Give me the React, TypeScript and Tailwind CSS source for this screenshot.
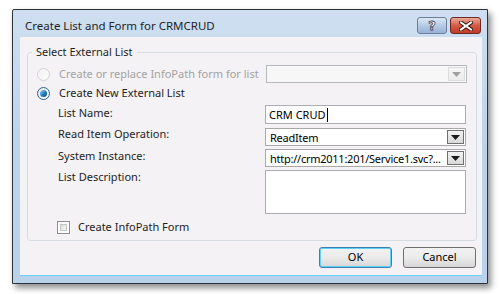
import React from "react";

const font = { fontFamily: '"Noto Sans", "Open Sans", sans-serif' };

function Arrow({ disabled }: { disabled?: boolean }) {
  return (
    <div
      className={`w-[17px] h-full flex items-center justify-center border ${
        disabled
          ? "border-[#dcdcdc] bg-gradient-to-b from-[#f6f6f6] to-[#ececec]"
          : "border-[#707070] bg-gradient-to-b from-[#f3f3f3] to-[#d9d9d9]"
      }`}
    >
      <svg width="9" height="5" viewBox="0 0 9 5">
        <path d="M0 0h9L4.5 5z" fill={disabled ? "#a0a0a0" : "#1a1a1a"} />
      </svg>
    </div>
  );
}

function Select({ value, disabled }: { value?: string; disabled?: boolean }) {
  return (
    <div
      className={`w-[201px] h-[18px] flex items-stretch border p-px ${
        disabled ? "border-[#b7babc] bg-[#f7f7f7]" : "border-[#a8a8a8] bg-white"
      }`}
    >
      <div className="flex-1 pl-[3px] text-[11px] tracking-[-0.25px] leading-[15px] text-black whitespace-nowrap overflow-hidden">
        {value}
      </div>
      <Arrow disabled={disabled} />
    </div>
  );
}

function Radio({ checked, disabled }: { checked?: boolean; disabled?: boolean }) {
  return (
    <div
      className={`w-[13px] h-[13px] rounded-full border flex items-center justify-center ${
        disabled
          ? "border-[#d2d2d2] bg-gradient-to-br from-[#f2f2f2] to-[#fcfcfc]"
          : "border-[#2c628b] bg-gradient-to-br from-[#e6e6e6] to-[#ffffff]"
      }`}
    >
      {checked && (
        <div className="w-[7px] h-[7px] rounded-full bg-gradient-to-br from-[#9ad5f7] via-[#2784c9] to-[#0b3e6f]" />
      )}
    </div>
  );
}

export default function App() {
  return (
    <div className="w-[499px] h-[294px] bg-white pl-[12px] pt-[9px] overflow-hidden" style={font}>
      <div className="w-[476px] h-[275px] border border-[#2e3338] rounded-tl-[2px] bg-gradient-to-b from-[#cfdff1] via-[#bcd3ec] to-[#b9d1ea] shadow-[3px_4px_6px_rgba(0,0,0,0.45)] flex flex-col">
        {/* title bar */}
        <div className="h-[27px] flex items-start shrink-0">
          <div className="pl-[12px] pt-[8px] text-[11.5px] leading-[16px] text-[#1e1e1e]">
            Create List and Form for CRMCRUD
          </div>
          <div className="ml-auto mt-[7px] mr-[6px] flex gap-[3px]">
            <div className="w-[30px] h-[17px] rounded-[3px] border border-[#6b7f9b] bg-gradient-to-b from-[#dbe7f5] via-[#b6cbe5] to-[#98b2d6] flex items-center justify-center">
              <span
                className="text-[13px] leading-[13px] font-bold text-white"
                style={{ fontFamily: '"DejaVu Sans", sans-serif', WebkitTextStroke: "0.8px #3b4a5e" }}
              >
                ?
              </span>
            </div>
            <div className="w-[31px] h-[17px] rounded-[3px] border border-[#6d2a22] bg-gradient-to-b from-[#e9a99c] via-[#d45a44] to-[#c23b26] flex items-center justify-center">
              <svg width="14" height="10" viewBox="0 0 14 10">
                <path d="M2 1.5l10 7M12 1.5l-10 7" stroke="#3b1a14" strokeWidth="4" strokeLinecap="square" />
                <path d="M2 1.5l10 7M12 1.5l-10 7" stroke="#ffffff" strokeWidth="2" strokeLinecap="square" />
              </svg>
            </div>
          </div>
        </div>

        {/* client area */}
        <div className="ml-[7px] mr-[5px] h-[239px] bg-[#f5f2f5] border-b border-[#6ad3f2] pt-[15px] pl-[7px]">
          <div className="relative w-[450px] h-[189px] border border-[#d5dde3] rounded-[3px] pl-[9px]">
            <div className="absolute -top-[9px] left-[4px] px-[4px] bg-[#f5f2f5] text-[11px] leading-[16px] text-[#1e1e1e]">
              Select External List
            </div>

            <div className="mt-[11px] h-[20px] flex items-center">
              <Radio disabled />
              <div className="ml-[9px] w-[207px] text-[11px] text-[#a2a2a2] whitespace-nowrap overflow-hidden">
                Create or replace InfoPath form for list
              </div>
              <Select disabled />
            </div>

            <div className="h-[19px] flex items-center">
              <Radio checked />
              <div className="ml-[9px] text-[11px] text-[#1e1e1e]">Create New External List</div>
            </div>

            <div className="pl-[21px] text-[11px] text-[#1e1e1e]">
              <div className="mt-[2px] flex items-start">
                <div className="w-[207px] leading-[16px]">List Name:</div>
                <div className="w-[201px] h-[19px] border border-[#abadb3] bg-white pl-[3px] flex items-center leading-[15px] text-black">
                  CRM CRUD<span className="inline-block w-px h-[14px] bg-black ml-px" />
                </div>
              </div>
              <div className="mt-[4px] flex items-start">
                <div className="w-[207px] leading-[16px] -mt-[2px]">Read Item Operation:</div>
                <Select value="ReadItem" />
              </div>
              <div className="mt-[3px] flex items-start">
                <div className="w-[207px] leading-[16px] -mt-[1px]">System Instance:</div>
                <Select value="http://crm2011:201/Service1.svc?..." />
              </div>
              <div className="mt-[3px] flex items-start">
                <div className="w-[207px] leading-[16px] -mt-[1px]">List Description:</div>
                <div className="w-[201px] h-[44px] border border-[#abadb3] bg-white" />
              </div>
              <div className="mt-[5px] flex items-center -ml-px">
                <div className="w-[13px] h-[13px] border border-[#8f8f8f] bg-white p-[2px]">
                  <div className="w-full h-full bg-gradient-to-br from-[#dcdcdc] to-[#f8f8f8] border border-[#c4c4c4]" />
                </div>
                <div className="ml-[8px] leading-[16px]">Create InfoPath Form</div>
              </div>
            </div>
          </div>

          <div className="mt-[6px] flex gap-[11px] pl-[292px]">
            <div className="w-[73px] h-[21px] rounded-[3px] border border-[#3c7fb1] shadow-[0_0_0_1px_#5fd0f6_inset] bg-gradient-to-b from-[#f2f2f2] via-[#ebebeb] to-[#d6d6d6] flex items-center justify-center text-[11px] text-black">
              OK
            </div>
            <div className="w-[73px] h-[21px] rounded-[3px] border border-[#707070] bg-gradient-to-b from-[#f2f2f2] via-[#ebebeb] to-[#d6d6d6] flex items-center justify-center text-[11px] text-black">
              Cancel
            </div>
          </div>
        </div>
      </div>
    </div>
  );
}
